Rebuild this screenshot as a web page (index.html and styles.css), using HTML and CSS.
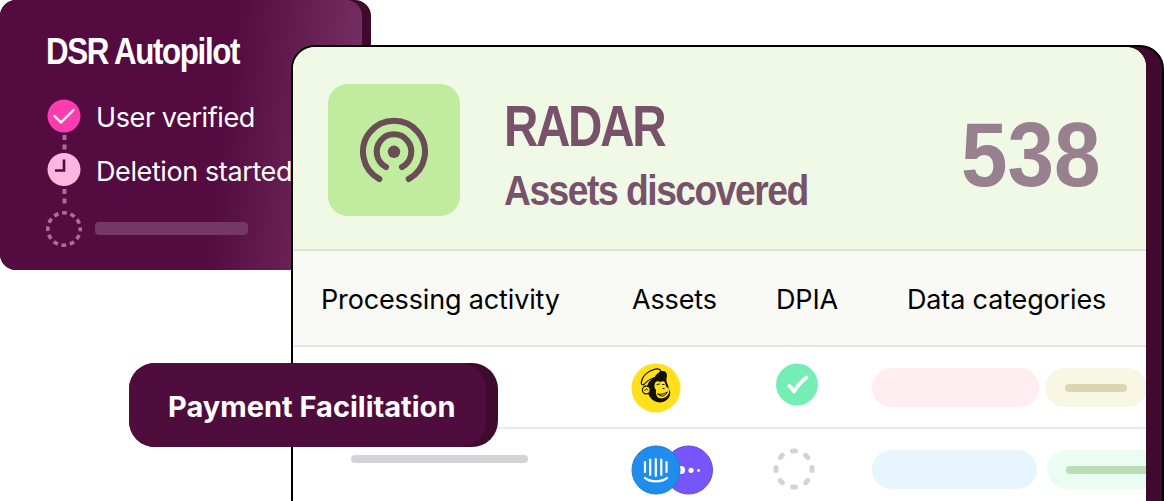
FILE: index.html
```html
<!DOCTYPE html>
<html lang="en">
<head>
    <meta charset="utf-8">
    <title>RADAR - Assets discovered</title>
    <link rel="stylesheet" href="styles.css">
</head>
<body>
    <div class="stage">
        <section class="autopilot">
            <div class="autopilot-panel">
                <h2>DSR Autopilot</h2>
                <div class="steps">
                    <svg class="rail" width="38" height="150" viewBox="0 0 38 150">
                        <path d="M19.500 37v15M19.500 91v15" stroke="#b06a9b" stroke-width="4" stroke-dasharray="5 4.500"/>
                        <circle cx="19" cy="18" r="16.500" fill="#ff3caf"/>
                        <path d="M9.500 18l6.500 6.500L28.500 12" fill="none" stroke="#fff" stroke-width="2.400" stroke-linecap="round" stroke-linejoin="round"/>
                        <circle cx="19" cy="71.500" r="16.500" fill="#ffb5e1"/>
                        <path d="M19 61.500v11h-9" fill="none" stroke="#530b40" stroke-width="2.600"/>
                        <circle cx="19" cy="131" r="16.200" fill="none" stroke="#b06a9b" stroke-width="3.600" stroke-dasharray="4.800 3.682" stroke-dashoffset="2.400"/>
                    </svg>
                    <div class="step-list">
                        <div class="step">User verified</div>
                        <div class="step">Deletion started</div>
                        <div class="step-bar"></div>
                    </div>
                </div>
            </div>
        </section>

        <section class="radar">
            <div class="radar-panel">
                <header class="radar-head">
                    <div class="radar-icon">
                        <svg width="72" height="68" viewBox="0 0 72 68" fill="none" stroke="#6a4c55" stroke-width="6" stroke-linecap="round">
                            <path d="M21.300 63a31 31 0 1 1 29.400 0"/>
                            <path d="M28 51a17.300 17.300 0 1 1 16 0"/>
                            <circle cx="36" cy="35.800" r="6.200" fill="#6a4c55" stroke="none"/>
                        </svg>
                    </div>
                    <div class="radar-title">
                        <h1>RADAR</h1>
                        <h3>Assets discovered</h3>
                    </div>
                    <div class="count">538</div>
                </header>
                <div class="row table-head">
                    <div class="col-activity">Processing activity</div>
                    <div class="col-assets">Assets</div>
                    <div class="col-dpia">DPIA</div>
                    <div class="col-data">Data categories</div>
                </div>
                <div class="row row-first">
                    <div class="col-activity"></div>
                    <div class="col-assets">
                        <svg width="50" height="50" viewBox="0 0 50 50">
                            <circle cx="25" cy="25" r="24.500" fill="#ffe01b"/>
                            <!-- head -->
                            <path d="M19 18c4-5 11-7 16-5 1 3 0 5 1 7 2 3 1 6 3 8 1 4-1 8-5 10-5 3-12 1-15-4-2-3-3-5-3-9 0-3 1-5 3-7z" fill="#111"/>
                            <!-- face -->
                            <path d="M24 20c1-2 4-2 5-1 2-1 5-1 5 1l1.500 4c2.500 1 3.500 4 2 7-2 4-8 6-11 3-2-2-1.500-5-1.500-7-1.500-2-2-4-1-7z" fill="#ffe01b"/>
                            <!-- cap -->
                            <path d="M10.300 19.500c1-7 7-11.500 13-13.200 3-.8 6-.3 6.500 1.700l-4 6C20 15.500 16.500 17 13.500 21c-1.300 1.500-3.500 1-3.200-1.500z" fill="#ffe01b" stroke="#111" stroke-width="1.200"/>
                            <path d="M23.500 14.500C26 9.500 31 7 34 8.500c2 1 2 4 2 6-4-2-8-1.500-12.500 0z" fill="#111"/>
                            <!-- ear -->
                            <circle cx="15.300" cy="27" r="3.900" fill="#ffe01b" stroke="#111" stroke-width="1.200"/>
                            <path d="M13.800 27.500c.5-2 2.500-2 3-.5" fill="none" stroke="#111" stroke-linecap="round"/>
                            <path d="M26 21.500l2.500-.5M31.500 21.500h1.500M26.500 31c3 1 7 0 10-2M27.500 31c1 3 7 3 8.500-1.500" fill="none" stroke="#111" stroke-linecap="round"/>
                            <path d="M31.500 25.500h2" stroke="#111"/>
                        </svg>
                    </div>
                    <div class="col-dpia">
                        <svg width="42" height="50" viewBox="0 0 42 50">
                            <circle cx="21" cy="21.500" r="21" fill="#76edb4"/>
                            <path d="M13.500 23c1.500 1 3 3.500 4.500 5.500C21 23.500 26 18 30.500 14.500" fill="none" stroke="#fff" stroke-width="3.800" stroke-linecap="round" stroke-linejoin="round"/>
                        </svg>
                    </div>
                    <div class="col-data">
                        <span class="tag tag-pink"></span>
                        <span class="tag tag-sand"><i></i></span>
                    </div>
                </div>
                <div class="row row-second">
                    <div class="col-activity"><div class="placeholder"></div></div>
                    <div class="col-assets">
                        <svg width="84" height="50" viewBox="0 0 84 50">
                            <circle cx="57.500" cy="25" r="24" fill="#7856ff" stroke="#6548d8"/>
                            <circle cx="50" cy="25" r="4" fill="#fff"/>
                            <circle cx="60" cy="25.300" r="2.600" fill="#fff"/>
                            <circle cx="67.500" cy="25.500" r="1.400" fill="#fff"/>
                            <circle cx="25" cy="25" r="24" fill="#1f8ded" stroke="#2079c9"/>
                            <path d="M14 17v10M19.200 14.500v15.500M24.800 14v17M30.300 14.500v15.500M35.500 17v10M14 33c6 4.500 16 4.500 22 0" fill="none" stroke="#fff" stroke-width="2.200" stroke-linecap="round"/>
                        </svg>
                    </div>
                    <div class="col-dpia">
                        <svg class="pending" width="44" height="44" viewBox="0 0 44 44" stroke="#d3d3d5" stroke-width="5" stroke-linecap="round">
                            <path d="M20.500 4h3M20.500 40h3M4 20.500v3M40 20.500v3M8.200 10.400l2.200-2.200M33.600 8.200l2.200 2.200M8.200 33.600l2.200 2.200M33.600 35.800l2.200-2.200"/>
                        </svg>
                    </div>
                    <div class="col-data">
                        <span class="tag tag-blue"></span>
                        <span class="tag tag-mint"><i></i></span>
                    </div>
                </div>
            </div>
        </section>

        <div class="activity-pill">
            <div class="pill-face"><span>Payment Facilitation</span></div>
        </div>
    </div>
</body>
</html>
```
FILE: styles.css
```css
* {
    box-sizing: border-box;
}
body {
    margin: 0;
    background: #fff;
    font-family: Inter, "Liberation Sans", sans-serif;
    overflow: hidden;
}
h1, h2, h3, .count {
    margin: 0;
    font-family: "Liberation Sans", Arial, sans-serif;
    font-weight: bold;
    white-space: nowrap;
    transform-origin: left;
}
svg {
    display: block;
    flex: none;
}
.stage {
    position: relative;
    width: 1164px;
    height: 501px;
    overflow: hidden;
}

/* DSR card */
.autopilot {
    position: absolute;
    left: 0;
    top: 0;
    width: 371px;
    height: 270px;
    background: #400a2e;
    border-radius: 16px;
}
.autopilot-panel {
    width: 362px;
    height: 270px;
    padding: 32px 0 0 45px;
    border-radius: 16px;
    background: linear-gradient(97deg, #530b40 60%, #7b3568 100%);
    color: #fff;
}
.autopilot h2 {
    margin-left: 1px;
    font-size: 36px;
    line-height: 40px;
    letter-spacing: -1.6px;
    transform: scaleX(0.87);
}
.steps {
    display: flex;
    gap: 13px;
    margin-top: 26px;
}
.step-list {
    padding-top: 4px;
}
.step {
    height: 32px;
    margin-bottom: 22px;
    font-size: 27px;
    line-height: 32px;
    letter-spacing: -0.4px;
    white-space: nowrap;
}
.step-bar {
    width: 153px;
    height: 13px;
    margin-top: 34px;
    margin-left: -1px;
    border-radius: 4px;
    background: #733865;
}

/* RADAR card */
.radar {
    position: absolute;
    left: 291px;
    top: 45px;
    width: 873px;
    height: 500px;
    border: 2px solid #000;
    border-radius: 24px;
    background: #400a2e;
    overflow: hidden;
}
.radar-panel {
    width: 853px;
    height: 500px;
    border-radius: 0 20px 0 0;
    background: #fff;
    overflow: hidden;
}
.radar-head {
    display: flex;
    height: 204px;
    padding: 37px 0 0 35px;
    background: #f0f9e5;
    border-bottom: 2px solid #dee5d5;
    color: #78526b;
}
.radar-icon {
    display: flex;
    flex: none;
    align-items: center;
    justify-content: center;
    width: 132px;
    height: 132px;
    border-radius: 20px;
    background: #c1eb9f;
}
.radar-title {
    width: 420px;
    margin-left: 44px;
    padding-top: 10px;
}
.radar h1 {
    font-size: 58px;
    line-height: 64px;
    letter-spacing: -2.8px;
    transform: scaleX(0.82);
}
.radar h3 {
    font-size: 43px;
    line-height: 48px;
    margin-top: 8px;
    letter-spacing: -1.7px;
    transform: scaleX(0.865);
}
.count {
    padding-top: 19px;
    margin-left: 37px;
    font-size: 90px;
    line-height: 105px;
    color: #98808e;
    transform: scaleX(0.93);
}
.row {
    display: grid;
    grid-template-columns: 339px 144px 94px 276px;
    border-bottom: 2px solid #e9e9e9;
    white-space: nowrap;
}
.table-head {
    height: 96px;
    padding-top: 33px;
    background: #f9faf5;
    border-color: #e4e5df;
    font-size: 27px;
    line-height: 32px;
    letter-spacing: -0.15px;
}
.table-head .col-activity {
    padding-left: 28px;
}
.table-head .col-data {
    padding-left: 37px;
}
.row-first {
    height: 82px;
    padding-top: 16px;
}
.row-second {
    height: 82px;
    padding-top: 16px;
}
.col-assets svg {
    margin-left: -1px;
}
.placeholder {
    width: 177px;
    height: 8px;
    margin: 10px 0 0 58px;
    border-radius: 4px;
    background: #d3d3d5;
}
.pending {
    margin: 2px 0 0 -4px;
}
.col-data {
    display: flex;
}
.tag {
    display: flex;
    flex: none;
    align-items: center;
    height: 39px;
    margin-top: 5px;
    border-radius: 20px;
}
.tag i {
    height: 8px;
    border-radius: 4px;
}
.tag-pink {
    width: 167px;
    margin-left: 2px;
    background: #ffedf0;
}
.tag-sand {
    width: 102px;
    margin-left: 6px;
    padding-left: 20px;
    background: #f8f7e5;
}
.tag-sand i {
    width: 62px;
    background: #dbd6ad;
}
.tag-blue {
    width: 165px;
    margin-left: 2px;
    background: #e7f6fe;
}
.tag-mint {
    width: 130px;
    margin-left: 10px;
    padding-left: 19px;
    background: #ebfdf2;
}
.tag-mint i {
    width: 100px;
    background: #b8ddb7;
}

/* floating pill over the table */
.activity-pill {
    position: absolute;
    left: 129px;
    top: 363px;
    width: 369px;
    height: 84px;
    border-radius: 26px;
    background: #400a2e;
}
.pill-face {
    display: flex;
    align-items: center;
    width: 357px;
    height: 84px;
    padding: 3px 0 0 39px;
    border-radius: 26px;
    background: #4f0d3e;
    color: #fff;
    font-size: 29px;
    font-weight: 700;
    white-space: nowrap;
}
```
